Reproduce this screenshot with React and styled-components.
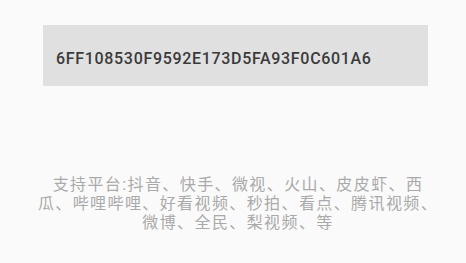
import React from "react";
import styled, { createGlobalStyle } from "styled-components";

const Global = createGlobalStyle`
  html, body { margin: 0; padding: 0; background: #fafafa; }
  body { width: 466px; height: 263px; overflow: hidden; }
`;

const Page = styled.div`
  display: flex;
  flex-direction: column;
  align-items: stretch;
  padding: 25px 0 0 0;
  height: 263px;
  box-sizing: border-box;
`;

const HashBox = styled.div`
  margin: 0 38px 0 43px;
  height: 61px;
  box-sizing: border-box;
  background: #e0e0e0;
  padding: 24px 13px 0 13px;
  font-family: Roboto, "Liberation Sans", sans-serif;
  font-size: 16px;
  font-weight: 500;
  line-height: 19px;
  letter-spacing: 0.68px;
  color: #3a3a3a;
`;

const Platforms = styled.p`
  margin: 89px 0 0 0;
  padding: 0 22px 0 32px;
  text-align: center;
  font-family: Roboto, "Noto Sans CJK SC", sans-serif;
  font-size: 16px;
  line-height: 19px;
  letter-spacing: 1.4px;
  color: #aaaaaa;
`;

export default function App() {
  return (
    <>
      <Global />
      <Page>
        <HashBox>6FF108530F9592E173D5FA93F0C601A6</HashBox>
        <Platforms>
          支持平台:抖音、快手、微视、火山、皮皮虾、西
          <br />
          瓜、哔哩哔哩、好看视频、秒拍、看点、腾讯视频、
          <br />
          微博、全民、梨视频、等
        </Platforms>
      </Page>
    </>
  );
}
